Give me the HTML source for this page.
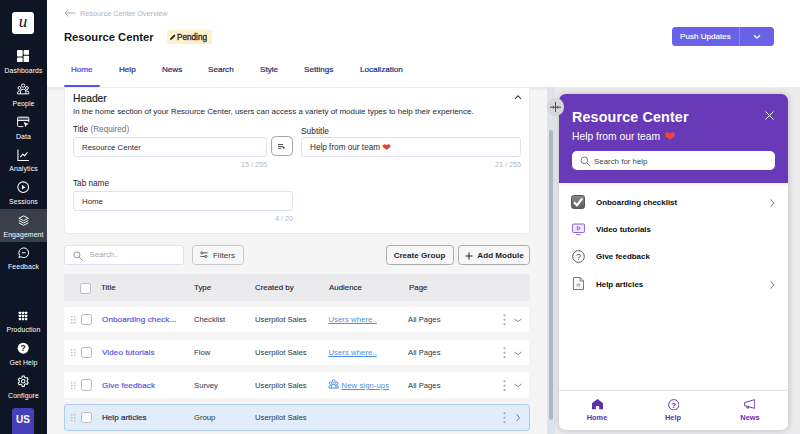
<!DOCTYPE html>
<html><head><meta charset="utf-8">
<style>
*{box-sizing:border-box;margin:0;padding:0}
html,body{width:800px;height:434px;overflow:hidden;background:#f5f5f6;font-family:"Liberation Sans",sans-serif;color:#1f2430}
.abs{position:absolute}
#side{position:absolute;left:0;top:0;width:47px;height:434px;background:#0e1626}
.nav{position:absolute;left:0;width:47px;height:33px;text-align:center;color:#fff;font-size:6.9px}
.nav svg{position:absolute;left:17.200px;top:4.600px;width:12.400px;height:12.400px}
.nav span{position:absolute;left:-10px;width:67px;top:21.3px;text-align:center;letter-spacing:.1px}
.nav.on{background:#3b3f4a}
#top{position:absolute;left:47px;top:0;width:753px;height:87px;background:#fff}
.t{position:absolute;white-space:nowrap;line-height:1}
.tab{position:absolute;top:66px;font-size:8.1px;-webkit-text-stroke:.2px currentColor;color:#272a6b;white-space:nowrap;line-height:1}
.inp{position:absolute;height:20px;border:1px solid #e0e0f0;border-radius:3px;background:#fff;font-size:7.800px;line-height:19.500px;padding-left:8px;color:#2a2d38}
.lbl{position:absolute;font-size:8.2px;line-height:1;color:#1f2430;white-space:nowrap}
.cnt{position:absolute;font-size:7.2px;line-height:1;color:#b5b8c0;text-align:right;white-space:nowrap}
.btn{position:absolute;height:19.600px;border:1px solid #a9aab0;border-radius:3.500px;background:#f7f7f8;font-size:8.1px;line-height:20.400px;text-align:center;color:#1f2430;white-space:nowrap}
.row{position:absolute;left:64px;width:465.300px;height:25.700px;background:#fff;border-radius:2px;font-size:7.7px}
.row .t{top:9.600px;color:#30333c}
.cb{position:absolute;width:11.200px;height:11.200px;border:1px solid #b9bac0;border-radius:2.5px;background:#fff}
.grip{position:absolute;left:7.200px;top:9.300px;width:5px;height:7.500px}
.wi{position:absolute;left:596px;font-size:7.95px;font-weight:bold;color:#0c0d10;line-height:1;white-space:nowrap}
.ft{position:absolute;top:413.500px;font-size:7.4px;font-weight:bold;color:#5b2fb0;line-height:1;width:60px;text-align:center}
</style></head><body>

<!-- SIDEBAR -->
<div id="side">
  <div class="abs" style="left:12px;top:12px;width:22px;height:22px;background:#fff;border-radius:3px;text-align:center;font:italic 17px/19px 'Liberation Serif',serif;color:#111">u</div>
  <div class="nav" style="top:46.00px"><svg style="left:17.200px;top:4.200px;width:12.200px;height:12.200px" viewBox="0 0 13 13"><rect x="0" y="0" width="6" height="7" rx="1" fill="#fff"/><rect x="7" y="0" width="6" height="5" rx="1" fill="#fff"/><rect x="0" y="8" width="6" height="5" rx="1" fill="#fff"/><rect x="7" y="6" width="6" height="7" rx="1" fill="#fff"/></svg><span>Dashboards</span></div>
  <div class="nav" style="top:78.65px"><svg viewBox="0 0 13 13" fill="none" stroke="#fff" stroke-width="1"><circle cx="6.500" cy="2.700" r="1.750"/><circle cx="2.600" cy="5.300" r="1.500"/><circle cx="10.400" cy="5.300" r="1.500"/><path d="M3.700 11.400V9.300a2.800 2.800 0 0 1 5.600 0v2.100M.6 11.400v-1.200a1.900 1.900 0 0 1 1.900-1.900h1.200M12.400 11.400v-1.200a1.900 1.900 0 0 0-1.900-1.900H9.300M.6 11.400h11.800"/></svg><span>People</span></div>
  <div class="nav" style="top:111.30px"><svg viewBox="0 0 13 13" fill="none" stroke="#fff" stroke-width="1"><rect x=".6" y="1.200" width="11.800" height="3.400" fill="#fff" fill-opacity=".3" stroke="none"/><path d="M6.600 11.100H1.800a1.200 1.200 0 0 1-1.200-1.200V2.400a1.200 1.200 0 0 1 1.200-1.200h9.400a1.200 1.200 0 0 1 1.200 1.200v4M.6 4.700h11.800"/><path d="M7 6.300l5.500 2-2.400 1-1 2.500z" fill="#fff" stroke="none"/></svg><span>Data</span></div>
  <div class="nav" style="top:143.95px"><svg viewBox="0 0 13 13" fill="none" stroke="#fff" stroke-width="1.1"><path d="M1 .5v11.500h11.500M3.500 8.500l2.500-3 2 1.500 3-3.500"/></svg><span>Analytics</span></div>
  <div class="nav" style="top:176.60px"><svg viewBox="0 0 13 13" fill="none" stroke="#fff" stroke-width="1.1"><circle cx="6.5" cy="6.5" r="5.600"/><path d="M5.200 4.200l3.600 2.300-3.600 2.300z" fill="#fff" stroke="none"/></svg><span>Sessions</span></div>
  <div class="nav on" style="top:209.25px;height:32.65px"><svg style="left:17.900px;top:5.300px;width:11.200px;height:11.200px" viewBox="0 0 13 13" fill="none" stroke="#fff" stroke-width="1.1"><path d="M6.500 1l5.500 2.800-5.500 2.800L1 3.800zM1 6.500l5.500 2.800L12 6.500M1 9.200l5.500 2.800L12 9.200"/></svg><span>Engagement</span></div>
  <div class="nav" style="top:241.90px"><svg style="left:17.700px;top:5.100px;width:11.500px;height:11.500px" viewBox="0 0 13 13" fill="none" stroke="#fff" stroke-width="1.1"><path d="M6.500 1a5.500 5.500 0 1 1-3.200 10L1 12l.8-2.600A5.500 5.500 0 0 1 6.500 1z"/><path d="M4.500 6.500h4"/></svg><span>Feedback</span></div>
  <div class="nav" style="top:305.15px"><svg style="left:18.300px;top:5.600px;width:10px;height:10px" viewBox="0 0 13 13" fill="#fff"><rect x="1" y="1" width="3" height="3" rx=".6"/><rect x="5" y="1" width="3" height="3" rx=".6"/><rect x="9" y="1" width="3" height="3" rx=".6"/><rect x="1" y="5" width="3" height="3" rx=".6"/><rect x="5" y="5" width="3" height="3" rx=".6"/><rect x="9" y="5" width="3" height="3" rx=".6"/><rect x="1" y="9" width="3" height="3" rx=".6"/><rect x="5" y="9" width="3" height="3" rx=".6"/><rect x="9" y="9" width="3" height="3" rx=".6"/></svg><span>Production</span></div>
  <div class="nav" style="top:337.80px"><svg viewBox="0 0 13 13"><circle cx="6.500" cy="6.500" r="5.800" fill="#fff"/><text x="6.500" y="9.600" font-size="9" font-weight="bold" text-anchor="middle" fill="#0f1628" font-family="Liberation Sans, sans-serif">?</text></svg><span>Get Help</span></div>
  <div class="nav" style="top:370.40px"><svg viewBox="0 0 13 13" fill="none" stroke="#fff" stroke-width="1.1"><circle cx="6.500" cy="6.500" r="1.800"/><path d="M5.500 1h2l.4 1.500 1.300.7 1.500-.5 1 1.700-1.100 1.100v1.500l1.100 1.100-1 1.700-1.500-.5-1.300.7L7.500 12h-2l-.4-1.500-1.300-.7-1.500.5-1-1.700 1.100-1.100V6l-1.100-1.100 1-1.700 1.500.5 1.300-.7z"/></svg><span>Configure</span></div>
  <div class="abs" style="left:12px;top:408px;width:22px;height:26px;background:#4540b8;border-radius:3px 3px 0 0;color:#fff;font-weight:bold;font-size:10px;text-align:center;line-height:23px">US</div>
</div>

<!-- TOP BAR -->
<div id="top"></div>
<svg class="abs" style="left:64px;top:8px" width="12" height="10" viewBox="0 0 12 10" fill="none" stroke="#a9abb3" stroke-width="1"><path d="M11.500 5H1M4.500 1.500L1 5l3.500 3.500"/></svg>
<div class="t" style="left:80px;top:10px;font-size:7.3px;color:#b1b3bb">Resource Center Overview</div>
<div class="t" id="ttl" style="left:64px;top:32px;font-size:11.2px;font-weight:bold;color:#15171c">Resource Center</div>
<div class="abs" style="left:167px;top:30px;width:45px;height:14px;background:#fdf1cd;border-radius:2px"></div>
<svg class="abs" style="left:170px;top:34px" width="6" height="6" viewBox="0 0 6 6"><path d="M0 6l.4-1.800L4.200 .4l1.400 1.400L1.800 5.600z" fill="#222"/></svg>
<div class="t" style="left:177px;top:33.5px;font-size:8.2px;color:#2a2620;-webkit-text-stroke:.3px #2a2620" id="pend">Pending</div>

<div class="abs" style="left:671.500px;top:26.800px;width:67.800px;height:19.600px;background:#6a62e6;border-radius:3.500px 0 0 3.500px"></div>
<div class="abs" style="left:739.300px;top:26.800px;width:34.400px;height:19.600px;background:#6a62e6;border-left:1px solid #8e88ee;border-radius:0 3.500px 3.500px 0"></div>
<div class="t" id="push" style="left:680px;top:33.400px;font-size:8.1px;color:#fff;-webkit-text-stroke:.15px #fff">Push Updates</div>
<svg class="abs" style="left:753px;top:34px" width="8" height="6" viewBox="0 0 8 6" fill="none" stroke="#fff" stroke-width="1.300"><path d="M1 1.200l3 3 3-3"/></svg>

<div class="tab" id="tb1" style="left:71px;color:#4a47d6">Home</div>
<div class="tab" id="tb2" style="left:119px">Help</div>
<div class="tab" id="tb3" style="left:162px">News</div>
<div class="tab" id="tb4" style="left:208px">Search</div>
<div class="tab" id="tb5" style="left:260px">Style</div>
<div class="tab" id="tb6" style="left:304px">Settings</div>
<div class="tab" id="tb7" style="left:360px">Localization</div>
<div class="abs" style="left:64px;top:85px;width:36px;height:2px;border-radius:1px;background:#5653ec"></div>
<div class="abs" style="left:47px;top:87px;width:753px;height:3.500px;background:linear-gradient(#e4e4e7,#f5f5f6)"></div>

<!-- HEADER CARD -->
<div class="abs" style="left:64px;top:87px;width:466px;height:146.500px;background:#fff;border:1px solid #eaeaef;border-top:none;border-radius:0 0 4px 4px"></div>
<div class="abs" style="left:65px;top:87px;width:464px;height:1px;background:#eeeef1"></div>
<div class="t" id="hdr" style="left:73px;top:93.5px;font-size:10.3px;color:#1b1e27;-webkit-text-stroke:.2px #1b1e27">Header</div>
<svg class="abs" style="left:514px;top:94px" width="8" height="6" viewBox="0 0 8 6" fill="none" stroke="#3a3d46" stroke-width="1.100"><path d="M1 4.800l3-3 3 3"/></svg>
<div class="t" id="desc" style="left:73px;top:108px;font-size:7.95px;color:#252833">In the home section of your Resource Center, users can access a variety of module types to help their experience.</div>
<div class="lbl" style="left:73px;top:126.3px" id="l1">Title <span style="color:#6e717a">(Required)</span></div>
<div class="inp" style="left:73px;top:137px;width:194px">Resource Center</div>
<div class="abs" style="left:270.600px;top:136.400px;width:22px;height:20px;border:1px solid #a4a5ab;border-radius:4.500px;background:#fff"></div>
<svg class="abs" style="left:278px;top:143.700px" width="7.400" height="5.600" viewBox="0 0 7.400 5.600" fill="none" stroke="#2c2e36" stroke-width=".9"><path d="M0 .6h5M0 2.700h5M0 4.800h3.200"/><path d="M5.200 2.300l2.100 1.350-2.100 1.350z" fill="#2c2e36" stroke="none"/></svg>
<div class="lbl" style="left:301px;top:126.500px;font-size:8.400px">Subtitle</div>
<div class="inp" style="left:301px;top:137px;width:220px;font-size:8.200px">Help from our team <span style="color:#e8412f;font-size:10.500px;line-height:0;position:relative;top:.8px;font-family:'DejaVu Sans',sans-serif">&#10084;</span></div>
<div class="cnt" style="left:200px;width:67px;top:161px">15 / 255</div>
<div class="cnt" style="left:454px;width:67px;top:161px">21 / 255</div>
<div class="lbl" style="left:73px;top:179.5px">Tab name</div>
<div class="inp" style="left:73px;top:191px;width:220px">Home</div>
<div class="cnt" style="left:226px;width:67px;top:214.700px">4 / 20</div>

<!-- TOOLBAR -->
<div class="inp" style="left:64px;top:245.400px;width:120px;height:19.600px;padding-left:24.500px;line-height:18px;color:#a4a7b0">Search..</div>
<svg class="abs" style="left:73px;top:251px" width="10" height="10" viewBox="0 0 11 11" fill="none" stroke="#92959d" stroke-width="1.100"><circle cx="4.300" cy="4.300" r="3.300"/><path d="M6.800 6.800l3.500 3.500"/></svg>
<div class="btn" style="left:192.200px;top:245.400px;width:52px;padding-left:11.500px;border-color:#c6c7cc;color:#3a3c45">Filters</div>
<svg class="abs" style="left:200px;top:251.400px" width="8" height="7.700" viewBox="0 0 10 9" fill="none" stroke="#4a4c54" stroke-width="1.150"><circle cx="2.200" cy="2" r="1.300"/><path d="M3.500 2h6"/><circle cx="7.500" cy="6.500" r="1.300"/><path d="M.5 6.500h5.700"/></svg>
<div class="btn" style="left:385.500px;top:245.400px;width:68px;font-weight:bold">Create Group</div>
<div class="btn" style="left:458px;top:245.400px;width:72px;font-weight:bold;padding-left:13px">Add Module</div>
<svg class="abs" style="left:465px;top:252px" width="8" height="8" viewBox="0 0 8 8" stroke="#222" stroke-width="1"><path d="M4 .5v7M.5 4h7"/></svg>

<!-- TABLE -->
<div class="abs" style="left:64px;top:274px;width:466px;height:27px;background:#ebebed;font-size:7.9px;-webkit-text-stroke:.12px #1f2430">
  <div class="cb" style="left:16px;top:8.500px"></div>
  <div class="t" style="left:37px;top:9.700px">Title</div>
  <div class="t" style="left:130px;top:9.700px">Type</div>
  <div class="t" style="left:191px;top:9.700px">Created by</div>
  <div class="t" style="left:265px;top:9.700px">Audience</div>
  <div class="t" style="left:345px;top:9.700px">Page</div>
</div>

<div class="row" style="top:306.800px">
  <svg class="grip" viewBox="0 0 5 7.500" fill="#bfc1c8"><rect x="0" y="0" width="1.500" height="1.500"/><rect x="3" y="0" width="1.500" height="1.500"/><rect x="0" y="3" width="1.500" height="1.500"/><rect x="3" y="3" width="1.500" height="1.500"/><rect x="0" y="6" width="1.500" height="1.500"/><rect x="3" y="6" width="1.500" height="1.500"/></svg>
  <div class="cb" style="left:17.200px;top:7px"></div>
  <div class="t" style="left:38px;color:#5a57e0;font-size:8.1px;letter-spacing:.1px;-webkit-text-stroke:.2px #5a57e0">Onboarding check...</div>
  <div class="t" style="left:130px">Checklist</div>
  <div class="t" style="left:191px">Userpilot Sales</div>
  <div class="t" style="left:264.400px;color:#4c8fe0;text-decoration:underline;text-decoration-thickness:.7px;letter-spacing:.08px">Users where..</div>
  <div class="t" style="left:344px">All Pages</div>
  <svg class="abs" style="left:438.800px;top:7.500px" width="3" height="11.400" viewBox="0 0 3 11.400" fill="#a3a4aa"><circle cx="1.500" cy="1.300" r="1.050"/><circle cx="1.500" cy="5.700" r="1.050"/><circle cx="1.500" cy="10.100" r="1.050"/></svg>
  <svg class="abs" style="left:450px;top:11px" width="8" height="5" viewBox="0 0 8 5" fill="none" stroke="#6d6f76" stroke-width=".8"><path d="M.5 1l3.500 2.600L7.500 1"/></svg>
</div>
<div class="row" style="top:339.700px">
  <svg class="grip" viewBox="0 0 5 7.500" fill="#bfc1c8"><rect x="0" y="0" width="1.500" height="1.500"/><rect x="3" y="0" width="1.500" height="1.500"/><rect x="0" y="3" width="1.500" height="1.500"/><rect x="3" y="3" width="1.500" height="1.500"/><rect x="0" y="6" width="1.500" height="1.500"/><rect x="3" y="6" width="1.500" height="1.500"/></svg>
  <div class="cb" style="left:17.200px;top:7px"></div>
  <div class="t" style="left:38px;color:#5a57e0;font-size:8.1px;letter-spacing:.1px;-webkit-text-stroke:.2px #5a57e0">Video tutorials</div>
  <div class="t" style="left:130px">Flow</div>
  <div class="t" style="left:191px">Userpilot Sales</div>
  <div class="t" style="left:264.400px;color:#4c8fe0;text-decoration:underline;text-decoration-thickness:.7px;letter-spacing:.08px">Users where..</div>
  <div class="t" style="left:344px">All Pages</div>
  <svg class="abs" style="left:438.800px;top:7.500px" width="3" height="11.400" viewBox="0 0 3 11.400" fill="#a3a4aa"><circle cx="1.500" cy="1.300" r="1.050"/><circle cx="1.500" cy="5.700" r="1.050"/><circle cx="1.500" cy="10.100" r="1.050"/></svg>
  <svg class="abs" style="left:450px;top:11px" width="8" height="5" viewBox="0 0 8 5" fill="none" stroke="#6d6f76" stroke-width=".8"><path d="M.5 1l3.500 2.600L7.500 1"/></svg>
</div>
<div class="row" style="top:372.400px">
  <svg class="grip" viewBox="0 0 5 7.500" fill="#bfc1c8"><rect x="0" y="0" width="1.500" height="1.500"/><rect x="3" y="0" width="1.500" height="1.500"/><rect x="0" y="3" width="1.500" height="1.500"/><rect x="3" y="3" width="1.500" height="1.500"/><rect x="0" y="6" width="1.500" height="1.500"/><rect x="3" y="6" width="1.500" height="1.500"/></svg>
  <div class="cb" style="left:17.200px;top:7px"></div>
  <div class="t" style="left:38px;color:#5a57e0;font-size:8.1px;letter-spacing:.1px;-webkit-text-stroke:.2px #5a57e0">Give feedback</div>
  <div class="t" style="left:130px">Survey</div>
  <div class="t" style="left:191px">Userpilot Sales</div>
  <svg class="abs" style="left:264.300px;top:6.300px" width="11.400" height="10.400" viewBox="0 0 13 13" fill="none" stroke="#4c8fe0" stroke-width="1.200"><circle cx="6.500" cy="2.700" r="1.750"/><circle cx="2.600" cy="5.300" r="1.500"/><circle cx="10.400" cy="5.300" r="1.500"/><path d="M3.700 11.400V9.300a2.800 2.800 0 0 1 5.600 0v2.100M.6 11.400v-1.200a1.900 1.900 0 0 1 1.900-1.900h1.200M12.400 11.400v-1.200a1.900 1.900 0 0 0-1.900-1.900H9.300M.6 11.400h11.800"/></svg>
  <div class="t" style="left:277.600px;color:#4c8fe0;text-decoration:underline;text-decoration-thickness:.7px;letter-spacing:.08px">New sign-ups</div>
  <div class="t" style="left:344px">All Pages</div>
  <svg class="abs" style="left:438.800px;top:7.500px" width="3" height="11.400" viewBox="0 0 3 11.400" fill="#a3a4aa"><circle cx="1.500" cy="1.300" r="1.050"/><circle cx="1.500" cy="5.700" r="1.050"/><circle cx="1.500" cy="10.100" r="1.050"/></svg>
  <svg class="abs" style="left:450px;top:11px" width="8" height="5" viewBox="0 0 8 5" fill="none" stroke="#6d6f76" stroke-width=".8"><path d="M.5 1l3.500 2.600L7.500 1"/></svg>
</div>
<div class="row" style="top:404.200px;height:27px;width:465.800px;background:#e1edfa;border:1px solid #afcdf1;border-radius:3px">
  <svg class="grip" style="left:6.200px;top:9px" viewBox="0 0 5 7.500" fill="#bfc1c8"><rect x="0" y="0" width="1.500" height="1.500"/><rect x="3" y="0" width="1.500" height="1.500"/><rect x="0" y="3" width="1.500" height="1.500"/><rect x="3" y="3" width="1.500" height="1.500"/><rect x="0" y="6" width="1.500" height="1.500"/><rect x="3" y="6" width="1.500" height="1.500"/></svg>
  <div class="cb" style="left:16.200px;top:6.600px"></div>
  <div class="t" style="left:37px;top:9.300px;color:#2a2d4a;font-size:8.1px;-webkit-text-stroke:.2px #2a2d4a">Help articles</div>
  <div class="t" style="left:129px;top:9.300px">Group</div>
  <div class="t" style="left:190px;top:9.300px">Userpilot Sales</div>
  <svg class="abs" style="left:437.800px;top:7.300px" width="3" height="11.400" viewBox="0 0 3 11.400" fill="#a3a4aa"><circle cx="1.500" cy="1.300" r="1.050"/><circle cx="1.500" cy="5.700" r="1.050"/><circle cx="1.500" cy="10.100" r="1.050"/></svg>
  <svg class="abs" style="left:451px;top:9px" width="4.500" height="7.400" viewBox="0 0 4.500 7.400" fill="none" stroke="#66686f" stroke-width=".9"><path d="M.6 .400l3 3.300-3 3.300"/></svg>
</div>

<!-- DIVIDER / SCROLLBAR -->
<div class="abs" style="left:547px;top:87px;width:8px;height:347px;background:#dfe4ea"></div>
<div class="abs" style="left:548.5px;top:130px;width:4.500px;height:290px;background:#afb8c6;border-radius:3px"></div>
<div class="abs" style="left:555px;top:87px;width:245px;height:347px;background:#ebebed"></div>

<!-- WIDGET -->
<div class="abs" style="left:559px;top:94px;width:229px;height:336px;background:#fff;border-radius:6.500px;box-shadow:0 0 7px rgba(0,0,0,.2);overflow:hidden">
  <div class="abs" style="left:0;top:0;width:229px;height:89px;background:#683ab7"></div><div class="abs" style="left:0;top:89px;width:229px;height:3px;background:linear-gradient(#ebebee,#fff)"></div>
</div>
<div class="abs" style="left:546.5px;top:98.3px;width:17.4px;height:17.4px;border-radius:9px;background:#d7d7da"></div>
<svg class="abs" style="left:549.7px;top:102px" width="11" height="10.400" viewBox="0 0 11 10.400" fill="none" stroke="#26262a" stroke-width=".8"><path d="M5.500 0v10.400M0 5.200h4.300M3 3.900l1.300 1.300L3 6.500M11 5.200H6.700M8 3.900L6.700 5.200 8 6.500"/></svg>
<div class="t" id="wttl" style="left:572px;top:109.800px;font-size:14.300px;letter-spacing:.15px;font-weight:bold;color:#fff">Resource Center</div>
<div class="t" id="wsub" style="left:572px;top:131.600px;font-size:10.300px;color:#fff">Help from our team <span style="color:#ee4632;font-size:13.500px;line-height:0;position:relative;top:1px;left:.8px;font-family:'DejaVu Sans',sans-serif">&#10084;</span></div>
<svg class="abs" style="left:765px;top:111px" width="9" height="9" viewBox="0 0 9 9" stroke="#fff" stroke-width="1"><path d="M.5 .5l8 8M8.500 .5l-8 8"/></svg>
<div class="abs" style="left:572px;top:151.200px;width:203px;height:19.300px;background:#fff;border-radius:5px"></div>
<svg class="abs" style="left:579.800px;top:155.600px" width="11" height="11" viewBox="0 0 11 11" fill="none" stroke="#777" stroke-width="1"><circle cx="4.300" cy="4.300" r="3.300"/><path d="M6.800 6.800l3.500 3.500"/></svg>
<div class="t" id="wsrch" style="left:594px;top:157.600px;font-size:7.9px;color:#444">Search for help</div>

<div class="abs" style="left:571px;top:195px;width:14px;height:14px;border-radius:2.500px;background:linear-gradient(#8a8a8a,#5c5c5c);border:1px solid #555"></div>
<svg class="abs" style="left:572px;top:196px" width="12" height="12" viewBox="0 0 12 12" fill="none" stroke="#fff" stroke-width="2.200"><path d="M2 6.300l3 3 5.200-6.800"/></svg>
<div class="wi" style="top:199px">Onboarding checklist</div>
<svg class="abs" style="left:770px;top:198.500px" width="4.500" height="8" viewBox="0 0 4.500 8" fill="none" stroke="#8a8a8e" stroke-width="1.150"><path d="M.8 .500l3 3.500-3 3.500"/></svg>

<svg class="abs" style="left:572px;top:223px" width="13" height="13" viewBox="0 0 13 13" fill="none" stroke="#8558d0" stroke-width=".9"><rect x=".5" y="1" width="12" height="8.500" rx="1" fill="#efe8fb"/><path d="M5.300 3.500l3 1.800-3 1.800z"/><path d="M4.200 11.600h4.600" stroke-width=".8"/></svg>
<div class="wi" style="top:226px">Video tutorials</div>

<svg class="abs" style="left:572px;top:250px" width="13" height="13" viewBox="0 0 13 13" fill="none" stroke="#444" stroke-width=".9"><circle cx="6.500" cy="6.500" r="5.800"/><text x="6.500" y="9.700" font-size="9" text-anchor="middle" fill="#444" stroke="none" font-family="Liberation Sans, sans-serif">?</text></svg>
<div class="wi" style="top:253.3px">Give feedback</div>

<svg class="abs" style="left:573px;top:277px" width="11" height="13" viewBox="0 0 11 13" fill="none" stroke="#6a6a6e" stroke-width=".9"><path d="M.5 .5h6.500l3.500 3.500v8.500H.5zM7 .5v3.500h3.500"/><rect x="3.500" y="6.500" width="4" height="3" fill="#bbb" stroke="none"/></svg>
<div class="wi" style="top:280.7px">Help articles</div>
<svg class="abs" style="left:770px;top:280.500px" width="4.500" height="8" viewBox="0 0 4.500 8" fill="none" stroke="#8a8a8e" stroke-width="1.150"><path d="M.8 .500l3 3.500-3 3.500"/></svg>

<div class="abs" style="left:559px;top:390px;width:229px;height:1px;background:#e3e3e6"></div>
<svg class="abs" style="left:592px;top:399.300px" width="11" height="10.300" viewBox="0 0 12 11"><path d="M6 0l6 4.500V11H7.800V7.500H4.200V11H0V4.500z" fill="#5b2fb0"/></svg>
<div class="ft" style="left:567px">Home</div>
<svg class="abs" style="left:667.700px;top:398.700px" width="11.600" height="11.600" viewBox="0 0 13 13" fill="none" stroke="#5b2fb0" stroke-width="1.100"><circle cx="6.500" cy="6.500" r="5.800"/><text x="6.500" y="9.700" font-size="9" font-weight="bold" text-anchor="middle" fill="#5b2fb0" stroke="none" font-family="Liberation Sans, sans-serif">?</text></svg>
<div class="ft" style="left:643px">Help</div>
<svg class="abs" style="left:744px;top:399px" width="11.200" height="10" viewBox="0 0 11.200 10" fill="none" stroke="#6236b8" stroke-width=".95" stroke-linejoin="round"><path d="M10.700 .6v8.800L.6 6.600V3.600zM2.400 7.100l.7 2h1.700l-.4-1.400"/></svg>
<div class="ft" style="left:720px">News</div>

</body></html>
